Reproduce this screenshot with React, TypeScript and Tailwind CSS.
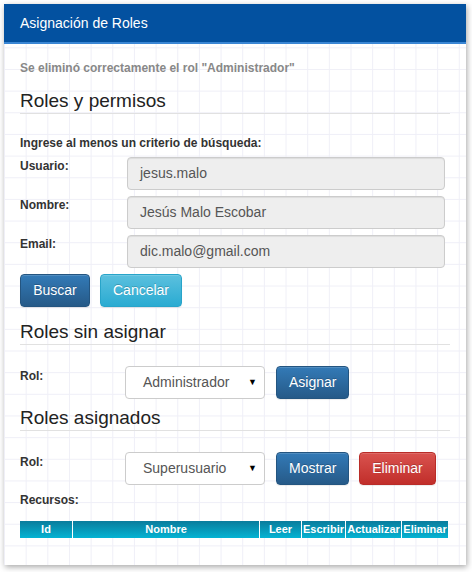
const font = "font-['Liberation_Sans',Arial,sans-serif]";

const btnBase =
  "h-[33px] px-3 rounded-[4px] border text-[14px] text-white shadow-[inset_0_1px_0_rgba(255,255,255,0.15),0_1px_1px_rgba(0,0,0,0.075)] [text-shadow:0_-1px_0_rgba(0,0,0,0.2)]";
const btnPrimary = `${btnBase} bg-[linear-gradient(to_bottom,#337ab7_0%,#265a88_100%)] border-[#245580]`;
const btnInfo = `${btnBase} bg-[linear-gradient(to_bottom,#5bc0de_0%,#2aabd2_100%)] border-[#28a4c9]`;
const btnDanger = `${btnBase} bg-[linear-gradient(to_bottom,#d9534f_0%,#c12e2a_100%)] border-[#b92c28]`;

function SectionTitle({ children, className = "" }: { children: string; className?: string }) {
  return (
    <div className={`border-b border-[#e1e1e1] ${className}`}>
      <h3 className="text-[19px] leading-[24px] text-[#222]">{children}</h3>
    </div>
  );
}

function Field({ label, value, top }: { label: string; value: string; top: string }) {
  return (
    <div className={`flex ${top}`}>
      <label className="w-[107px] pt-[2px] text-[12px] font-bold text-[#333] leading-[14px]">{label}</label>
      <div className="w-[318px] h-[33px] rounded-[4px] border border-[#ccc] bg-[#eee] px-3 flex items-center text-[14px] text-[#555] shadow-[inset_0_1px_1px_rgba(0,0,0,0.075)]">
        {value}
      </div>
    </div>
  );
}

function Select({ value }: { value: string }) {
  return (
    <div className="relative w-[140px] h-[33px] rounded-[4px] border border-[#ccc] bg-white flex items-center pl-[17px] text-[14px] text-[#555]">
      {value}
      <span className="absolute right-[7px] top-[9px] text-[9px] text-black">▼</span>
    </div>
  );
}

const cols = ["Id", "Nombre", "Leer", "Escribir", "Actualizar", "Eliminar"];

export default function App() {
  return (
    <div className={`${font} bg-white min-h-[572px] p-1`}>
      <div className="w-[462px] h-[561px] bg-white bg-[linear-gradient(to_right,#efeff7_1px,transparent_1px),linear-gradient(to_bottom,#efeff7_1px,transparent_1px)] bg-[size:21.67px_21.67px] shadow-[1px_2px_6px_rgba(0,0,0,0.35)]">
        <div className="h-[40px] bg-[#0351a0] border-b-2 border-[#3a86d4] px-4 flex items-center text-[14px] text-white">
          Asignación de Roles
        </div>
        <div className="px-4 pt-[17px]">
          <p className="text-[12px] leading-[14px] font-bold text-[#888]">
            Se eliminó correctamente el rol "Administrador"
          </p>
          <SectionTitle className="mt-[14px]">Roles y permisos</SectionTitle>
          <p className="mt-[22px] text-[12px] leading-[14px] font-bold text-[#333]">
            Ingrese al menos un criterio de búsqueda:
          </p>
          <Field label="Usuario:" value="jesus.malo" top="mt-[7px]" />
          <Field label="Nombre:" value="Jesús Malo Escobar" top="mt-[6px]" />
          <Field label="Email:" value="dic.malo@gmail.com" top="mt-[6px]" />
          <div className="flex gap-[10px] mt-[6px]">
            <button className={`${btnPrimary} w-[70px]`}>Buscar</button>
            <button className={`${btnInfo} w-[82px]`}>Cancelar</button>
          </div>

          <SectionTitle className="mt-[13px]">Roles sin asignar</SectionTitle>
          <div className="flex mt-[21px]">
            <label className="w-[105px] pt-[3px] text-[12px] font-bold text-[#333] leading-[14px]">Rol:</label>
            <Select value="Administrador" />
            <button className={`${btnPrimary} w-[73px] ml-[11px]`}>Asignar</button>
          </div>

          <SectionTitle className="mt-[7px]">Roles asignados</SectionTitle>
          <div className="flex mt-[21px]">
            <label className="w-[105px] pt-[3px] text-[12px] font-bold text-[#333] leading-[14px]">Rol:</label>
            <Select value="Superusuario" />
            <button className={`${btnPrimary} w-[73px] ml-[11px]`}>Mostrar</button>
            <button className={`${btnDanger} w-[77px] ml-[10px]`}>Eliminar</button>
          </div>
          <p className="mt-[8px] text-[12px] leading-[14px] font-bold text-[#333]">Recursos:</p>

          <div className="mt-[14px] grid grid-cols-[52px_186px_41px_43px_55px_46px] gap-x-px">
            {cols.map((c) => (
              <div
                key={c}
                className="h-[17px] bg-[linear-gradient(to_bottom,#0a7c9c_0%,#04b3d3_100%)] flex items-center justify-center text-[11px] font-bold text-white overflow-hidden whitespace-nowrap"
              >
                {c}
              </div>
            ))}
          </div>
        </div>
      </div>
    </div>
  );
}
